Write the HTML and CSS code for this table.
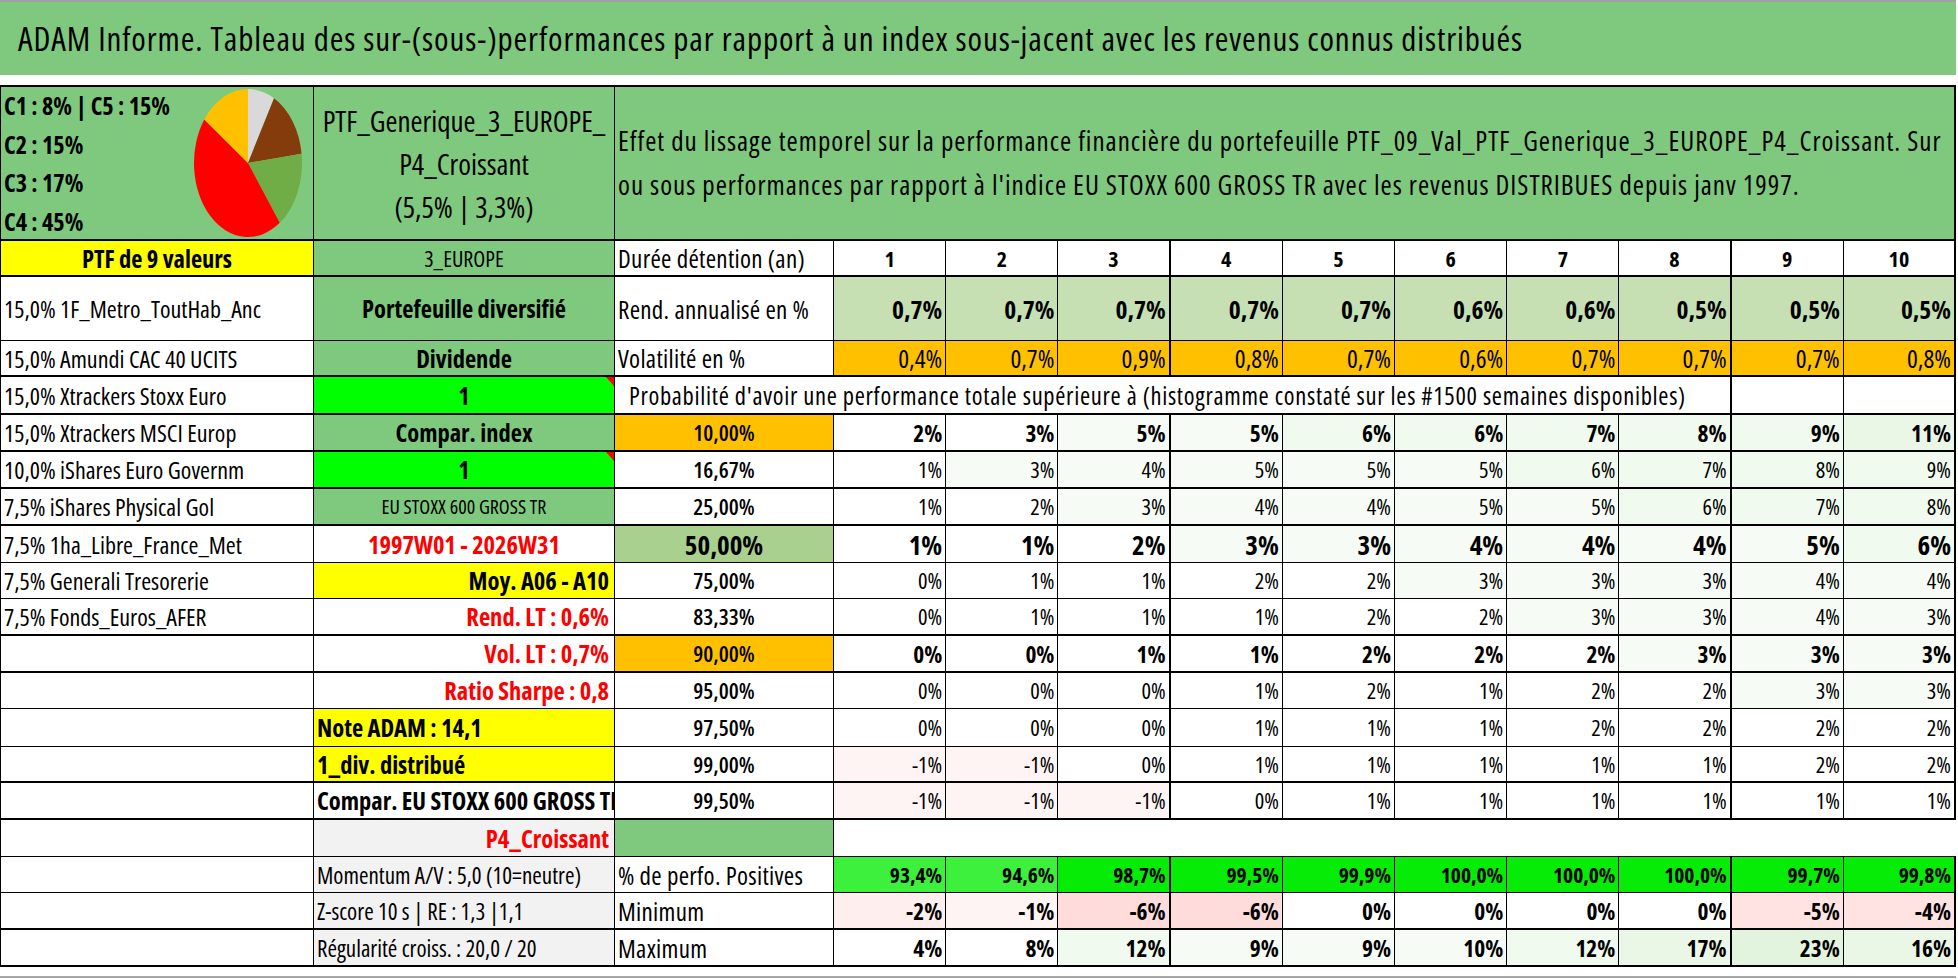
FILE: index.html
```html
<!DOCTYPE html>
<html lang="fr">
<head>
<meta charset="utf-8">
<title>ADAM Informe</title>
<link rel="stylesheet" href="styles.css">
</head>
<body>
<div class="sheet">
  <header class="title">ADAM Informe. Tableau des sur-(sous-)performances par rapport à un index sous-jacent avec les revenus connus distribués</header>
  <div class="tbl">
    <div class="row top bb2">
      <div class="c a-top">
        <div class="legend">
          <span>C1 : 8% | C5 : 15%</span>
          <span>C2 : 15%</span>
          <span>C3 : 17%</span>
          <span>C4 : 45%</span>
        </div>
        <svg class="pie" width="112" height="150" viewBox="0 0 112 150">
          <path d="M56 75 L56 1 A54 74 0 0 1 82.02 10.15 Z" fill="#d9d9d9"/>
          <path d="M56 75 L82.02 10.15 A54 74 0 0 1 109.57 65.73 Z" fill="#843c0c"/>
          <path d="M56 75 L109.57 65.73 A54 74 0 0 1 87.74 134.87 Z" fill="#70ad47"/>
          <path d="M56 75 L87.74 134.87 A54 74 0 0 1 12.31 31.50 Z" fill="#ff0000"/>
          <path d="M56 75 L12.31 31.50 A54 74 0 0 1 56 1 Z" fill="#ffc000"/>
        </svg>
      </div>
      <div class="c grn ctr b-top">PTF_Generique_3_EUROPE_<br>P4_Croissant<br>(5,5% | 3,3%)</div>
      <div class="c grn desc">Effet du lissage temporel sur la performance financière du portefeuille PTF_09_Val_PTF_Generique_3_EUROPE_P4_Croissant. Sur<br>ou sous performances par rapport à l'indice EU STOXX 600 GROSS TR avec les revenus DISTRIBUES depuis janv 1997.</div>
    </div>

    <div class="row std h36 bb2">
      <div class="c yel ctr bt">PTF de 9 valeurs</div>
      <div class="c grn ctr sm3">3_EUROPE</div>
      <div class="c lbl">Durée détention (an)</div>
      <div class="c hd">1</div><div class="c hd">2</div><div class="c hd">3</div><div class="c hd">4</div><div class="c hd">5</div>
      <div class="c hd">6</div><div class="c hd">7</div><div class="c hd">8</div><div class="c hd">9</div><div class="c hd">10</div>
    </div>

    <div class="row std h64">
      <div class="c">15,0% 1F_Metro_ToutHab_Anc</div>
      <div class="c grn ctr bt">Portefeuille diversifié</div>
      <div class="c lbl">Rend. annualisé en %</div>
      <div class="c n rv b rend">0,7%</div><div class="c n rv b rend">0,7%</div><div class="c n rv b rend">0,7%</div><div class="c n rv b rend">0,7%</div><div class="c n rv b rend">0,7%</div>
      <div class="c n rv b rend">0,6%</div><div class="c n rv b rend">0,6%</div><div class="c n rv b rend">0,5%</div><div class="c n rv b rend">0,5%</div><div class="c n rv b rend">0,5%</div>
    </div>

    <div class="row std h36 bb2">
      <div class="c">15,0% Amundi CAC 40 UCITS</div>
      <div class="c grn ctr bt">Dividende</div>
      <div class="c lbl">Volatilité en %</div>
      <div class="c n rv org">0,4%</div><div class="c n rv org">0,7%</div><div class="c n rv org">0,9%</div><div class="c n rv org">0,8%</div><div class="c n rv org">0,7%</div>
      <div class="c n rv org">0,6%</div><div class="c n rv org">0,7%</div><div class="c n rv org">0,7%</div><div class="c n rv org">0,7%</div><div class="c n rv org">0,8%</div>
    </div>

    <div class="row h38 bb2">
      <div class="c">15,0% Xtrackers Stoxx Euro</div>
      <div class="c lime ctr bt one cm">1</div>
      <div class="c prob">Probabilité d'avoir une performance totale supérieure à (histogramme constaté sur les #1500 semaines disponibles)</div>
      <div class="c"></div>
      <div class="c"></div>
    </div>

    <div class="row std bb2">
      <div class="c">15,0% Xtrackers MSCI Europ</div>
      <div class="c grn ctr bt">Compar. index</div>
      <div class="c pc org">10,00%</div>
      <div class="c n nb">2%</div><div class="c n nb">3%</div><div class="c n nb g1">5%</div><div class="c n nb g1">5%</div><div class="c n nb g2">6%</div>
      <div class="c n nb g2">6%</div><div class="c n nb g2">7%</div><div class="c n nb g2">8%</div><div class="c n nb g2">9%</div><div class="c n nb g3">11%</div>
    </div>

    <div class="row std bb2">
      <div class="c">10,0% iShares Euro Governm</div>
      <div class="c lime ctr bt one cm">1</div>
      <div class="c pc">16,67%</div>
      <div class="c n">1%</div><div class="c n g1">3%</div><div class="c n g1">4%</div><div class="c n g1">5%</div><div class="c n g1">5%</div>
      <div class="c n g1">5%</div><div class="c n g2">6%</div><div class="c n g2">7%</div><div class="c n g2">8%</div><div class="c n g2">9%</div>
    </div>

    <div class="row std bb2">
      <div class="c">7,5% iShares Physical Gol</div>
      <div class="c grn ctr sm">EU STOXX 600 GROSS TR</div>
      <div class="c pc">25,00%</div>
      <div class="c n">1%</div><div class="c n">2%</div><div class="c n g1">3%</div><div class="c n g1">4%</div><div class="c n g1">4%</div>
      <div class="c n g1">5%</div><div class="c n g1">5%</div><div class="c n g2">6%</div><div class="c n g2">7%</div><div class="c n g2">8%</div>
    </div>

    <div class="row std">
      <div class="c">7,5% 1ha_Libre_France_Met</div>
      <div class="c ctr bt red">1997W01 - 2026W31</div>
      <div class="c pc xl lgr">50,00%</div>
      <div class="c n xl">1%</div><div class="c n xl">1%</div><div class="c n xl">2%</div><div class="c n xl g1">3%</div><div class="c n xl g1">3%</div>
      <div class="c n xl g1">4%</div><div class="c n xl g1">4%</div><div class="c n xl g1">4%</div><div class="c n xl g1">5%</div><div class="c n xl g2">6%</div>
    </div>

    <div class="row std h36">
      <div class="c">7,5% Generali Tresorerie</div>
      <div class="c yel rt bt">Moy. A06 - A10</div>
      <div class="c pc">75,00%</div>
      <div class="c n">0%</div><div class="c n">1%</div><div class="c n">1%</div><div class="c n">2%</div><div class="c n">2%</div>
      <div class="c n g1">3%</div><div class="c n g1">3%</div><div class="c n g1">3%</div><div class="c n g1">4%</div><div class="c n g1">4%</div>
    </div>

    <div class="row std bb2">
      <div class="c">7,5% Fonds_Euros_AFER</div>
      <div class="c rt bt red">Rend. LT : 0,6%</div>
      <div class="c pc">83,33%</div>
      <div class="c n">0%</div><div class="c n">1%</div><div class="c n">1%</div><div class="c n">1%</div><div class="c n">2%</div>
      <div class="c n">2%</div><div class="c n g1">3%</div><div class="c n g1">3%</div><div class="c n g1">4%</div><div class="c n g1">3%</div>
    </div>

    <div class="row std bb2">
      <div class="c"></div>
      <div class="c rt bt red">Vol. LT : 0,7%</div>
      <div class="c pc org">90,00%</div>
      <div class="c n nb">0%</div><div class="c n nb">0%</div><div class="c n nb">1%</div><div class="c n nb">1%</div><div class="c n nb">2%</div>
      <div class="c n nb">2%</div><div class="c n nb">2%</div><div class="c n nb g1">3%</div><div class="c n nb g1">3%</div><div class="c n nb g1">3%</div>
    </div>

    <div class="row std h36">
      <div class="c"></div>
      <div class="c rt bt red">Ratio Sharpe : 0,8</div>
      <div class="c pc">95,00%</div>
      <div class="c n">0%</div><div class="c n">0%</div><div class="c n">0%</div><div class="c n">1%</div><div class="c n">2%</div>
      <div class="c n">1%</div><div class="c n">2%</div><div class="c n">2%</div><div class="c n g1">3%</div><div class="c n g1">3%</div>
    </div>

    <div class="row std h38">
      <div class="c"></div>
      <div class="c yel bt">Note ADAM : 14,1</div>
      <div class="c pc">97,50%</div>
      <div class="c n">0%</div><div class="c n">0%</div><div class="c n">0%</div><div class="c n">1%</div><div class="c n">1%</div>
      <div class="c n">1%</div><div class="c n">2%</div><div class="c n">2%</div><div class="c n">2%</div><div class="c n">2%</div>
    </div>

    <div class="row std h36 bb2">
      <div class="c"></div>
      <div class="c yel bt">1_div. distribué</div>
      <div class="c pc">99,00%</div>
      <div class="c n r1">-1%</div><div class="c n r1">-1%</div><div class="c n">0%</div><div class="c n">1%</div><div class="c n">1%</div>
      <div class="c n">1%</div><div class="c n">1%</div><div class="c n">1%</div><div class="c n">2%</div><div class="c n">2%</div>
    </div>

    <div class="row std bb2">
      <div class="c"></div>
      <div class="c bt clip">Compar. EU STOXX 600 GROSS TR</div>
      <div class="c pc">99,50%</div>
      <div class="c n r1">-1%</div><div class="c n r1">-1%</div><div class="c n r1">-1%</div><div class="c n">0%</div><div class="c n">1%</div>
      <div class="c n">1%</div><div class="c n">1%</div><div class="c n">1%</div><div class="c n">1%</div><div class="c n">1%</div>
    </div>

    <div class="row">
      <div class="c"></div>
      <div class="c gry rt bt red">P4_Croissant</div>
      <div class="c grn"></div>
      <div class="blank"></div>
    </div>

    <div class="row std h36">
      <div class="c"></div>
      <div class="c gry sm2">Momentum A/V : 5,0 (10=neutre)</div>
      <div class="c lbl">% de perfo. Positives</div>
      <div class="c n pf p1">93,4%</div><div class="c n pf p1">94,6%</div><div class="c n pf p2">98,7%</div><div class="c n pf p2">99,5%</div><div class="c n pf p2">99,9%</div>
      <div class="c n pf p2">100,0%</div><div class="c n pf p2">100,0%</div><div class="c n pf p2">100,0%</div><div class="c n pf p2">99,7%</div><div class="c n pf p2">99,8%</div>
    </div>

    <div class="row std bb2">
      <div class="c"></div>
      <div class="c gry sm2">Z-score 10 s | RE : 1,3 |1,1</div>
      <div class="c lbl">Minimum</div>
      <div class="c n nb r2">-2%</div><div class="c n nb r1">-1%</div><div class="c n nb r4">-6%</div><div class="c n nb r4">-6%</div><div class="c n nb">0%</div>
      <div class="c n nb">0%</div><div class="c n nb">0%</div><div class="c n nb">0%</div><div class="c n nb r3">-5%</div><div class="c n nb r3">-4%</div>
    </div>

    <div class="row std bb2">
      <div class="c"></div>
      <div class="c gry sm2">Régularité croiss. : 20,0 / 20</div>
      <div class="c lbl">Maximum</div>
      <div class="c n nb">4%</div><div class="c n nb">8%</div><div class="c n nb g2">12%</div><div class="c n nb g1">9%</div><div class="c n nb g1">9%</div>
      <div class="c n nb g1">10%</div><div class="c n nb g2">12%</div><div class="c n nb g3">17%</div><div class="c n nb g4">23%</div><div class="c n nb g3">16%</div>
    </div>
  </div>
  <div class="foot"></div>
</div>
</body>
</html>
```

FILE: styles.css
```css
:root {
  --cols: 313px 301px 219px repeat(10, 1fr);
  --grn: #7fc97f;
  --lgr: #a9d08e;
  --rend: #c6e0b4;
  --org: #ffc000;
  --yel: #ffff00;
  --lime: #00ff00;
  --gry: #f2f2f2;
  --red: #ff0000;
}

* { box-sizing: border-box; }

html, body {
  margin: 0;
  padding: 0;
  background: #fff;
}

body {
  font-family: "Open Sans", "DejaVu Sans Condensed", sans-serif;
  font-stretch: 75%;
  font-weight: 500;
  color: #000;
}

.sheet { width: 1956px; }

.title {
  height: 75px;
  border-top: 2px solid #a0a0a0;
  background: var(--grn);
  font-size: 33px;
  letter-spacing: 0.9px;
  line-height: 73px;
  padding-left: 18px;
  white-space: nowrap;
  margin-bottom: 10px;
}

.tbl {
  border-left: 1px solid #000;
  border-top: 2px solid #000;
}

.row {
  display: grid;
  grid-template-columns: var(--cols);
  height: 37px;
  border-bottom: 1px solid #000;
}
.row.bb2 { border-bottom-width: 2px; }
.row.h36 { height: 36px; }
.row.h38 { height: 38px; }
.row.h64 { height: 64px; }
.row.top { height: 154px; }

.row > .c:last-child { border-right-width: 2px; }
.row.std > .c:nth-child(6),
.row.std > .c:nth-child(11) { border-right-width: 2px; }

.c {
  border-right: 1px solid #000;
  display: flex;
  align-items: center;
  padding: 0 3px;
  overflow: hidden;
  white-space: nowrap;
  min-width: 0;
  font-size: 24px;
  position: relative;
}

.ctr { justify-content: center; text-align: center; }
.rt { justify-content: flex-end; padding-right: 5px; }
.bt { font-weight: 700; font-size: 24.5px; }
.one { font-size: 24px; }
.sm { font-size: 20px; }
.sm3 { font-size: 22px; }
.sm2 { font-size: 23px; }
.lbl { font-size: 25px; letter-spacing: 0.3px; }
.clip { justify-content: flex-start; }

.grn { background: var(--grn); }
.lgr { background: var(--lgr); }
.rend { background: var(--rend); }
.org { background: var(--org); }
.yel { background: var(--yel); }
.lime { background: var(--lime); }
.gry { background: var(--gry); }
.red { color: var(--red); }

.g1 { background: #f6fcf5; }
.g2 { background: #f0faee; }
.g3 { background: #eaf7e7; }
.g4 { background: #e2f4de; }
.r1 { background: #fff4f4; }
.r2 { background: #ffeeee; }
.r3 { background: #ffe3e3; }
.r4 { background: #ffdcdc; }
.p1 { background: #3cf03c; }
.p2 { background: #06ec06; }

.hd { justify-content: center; font-weight: 700; font-size: 22px; }
.n { justify-content: flex-end; padding-right: 3px; font-size: 22.4px; }
.b { font-weight: 700; }
.rv { font-size: 25.5px; }
.nb { font-weight: 700; font-size: 23.4px; }
.pf { font-weight: 700; font-size: 21.5px; }
.xl { font-weight: 700; font-size: 27px; }
.pc { justify-content: center; font-weight: 600; font-size: 22.4px; }
.pc.xl { font-weight: 700; font-size: 27px; }

.cm::after {
  content: "";
  position: absolute;
  top: 0;
  right: 0;
  border-left: 8px solid transparent;
  border-top: 9px solid #ff0000;
}

/* top block */
.a-top {
  background: var(--grn);
  align-items: flex-start;
  padding: 0 3px;
}
.legend {
  display: flex;
  flex-direction: column;
  font-weight: 700;
  font-size: 24.2px;
  line-height: 38.7px;
}
.pie {
  position: absolute;
  left: 191px;
  top: 1px;
}
.b-top {
  font-size: 29px;
  line-height: 43px;
}
.desc {
  grid-column: 3 / -1;
  font-size: 27px;
  letter-spacing: 1px;
  line-height: 44px;
  white-space: nowrap;
  padding-left: 3px;
}

.prob {
  grid-column: 3 / 12;
  font-size: 24.5px;
  letter-spacing: 0.7px;
  padding-left: 14px;
  border-right-width: 2px;
}

.blank { grid-column: 4 / -1; }

.foot {
  height: 11px;
  border-bottom: 2px solid #a6a6a6;
}
```
